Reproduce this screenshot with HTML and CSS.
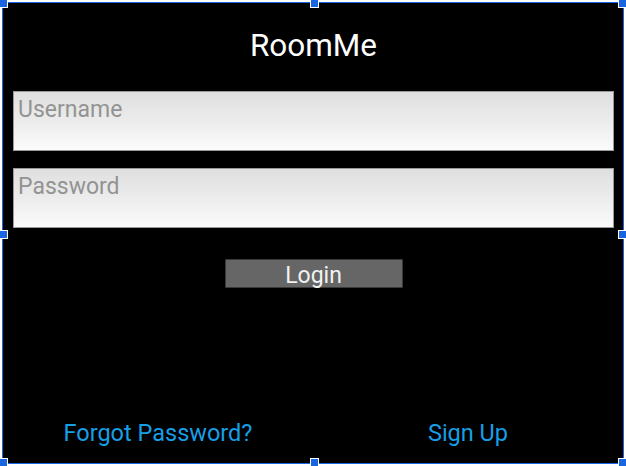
FILE: index.html
```html
<!DOCTYPE html>
<html lang="en">
<head>
<meta charset="utf-8">
<title>RoomMe</title>
<link rel="stylesheet" href="styles.css">
</head>
<body>
<div class="frame">
  <span class="handle h-tl"></span>
  <span class="handle h-tm"></span>
  <span class="handle h-tr"></span>
  <span class="handle h-ml"></span>
  <span class="handle h-mr"></span>
  <span class="handle h-bl"></span>
  <span class="handle h-bm"></span>
  <span class="handle h-br"></span>
  <div class="form">
    <h1 class="title">RoomMe</h1>
    <input class="field" type="text" placeholder="Username">
    <input class="field field-pass" type="password" placeholder="Password">
    <div class="actions">
      <button class="login" type="button">Login</button>
    </div>
  </div>
  <div class="links">
    <a class="link" href="#">Forgot Password?</a>
    <a class="link" href="#">Sign Up</a>
  </div>
</div>
</body>
</html>
```
FILE: styles.css
```css
html, body {
  margin: 0;
  padding: 0;
  background: #ffffff;
}
body {
  font-family: Roboto, "Liberation Sans", sans-serif;
}
.frame {
  position: relative;
  margin: 2px;
  width: 620px;
  height: 460px;
  border: 1px solid #1a66e0;
  background: #000000;
  display: flex;
  flex-direction: column;
}
.handle {
  position: absolute;
  width: 7px;
  height: 7px;
  background: #1a66e0;
  outline: 1px solid #ffffff;
}
.h-tl { left: -3px; top: -3px; }
.h-tm { left: calc(50% - 2px); top: -3px; }
.h-tr { right: -3px; top: -3px; }
.h-ml { left: -3px; top: calc(50% - 2px); }
.h-mr { right: -3px; top: calc(50% - 2px); }
.h-bl { left: -3px; bottom: -3px; }
.h-bm { left: calc(50% - 2px); bottom: -3px; }
.h-br { right: -3px; bottom: -3px; }
.form {
  display: flex;
  flex-direction: column;
  padding: 0 9px 0 10px;
}
.title {
  margin: 25px 0 27px;
  font-weight: 400;
  font-size: 31.5px;
  line-height: 36px;
  color: #ffffff;
  text-align: center;
}
.field {
  box-sizing: border-box;
  display: block;
  width: 601px;
  height: 60px;
  margin: 0;
  padding: 4px 4px 27px 4px;
  border: 1px solid #9a9a9a;
  border-radius: 0;
  background: linear-gradient(to bottom, #dfdfdf 0%, #ececec 50%, #fbfbfb 100%);
  font-family: Roboto, "Liberation Sans", sans-serif;
  font-size: 23px;
  line-height: 27px;
  color: #333333;
  outline: none;
}
.field::placeholder {
  color: #939393;
  opacity: 1;
}
.field-pass {
  margin-top: 17px;
}
.actions {
  display: flex;
  justify-content: center;
  margin-top: 31px;
}
.login {
  box-sizing: border-box;
  width: 178px;
  height: 29px;
  margin: 0;
  padding: 3px 0 0;
  border: 1px solid #3a3a3a;
  border-radius: 1px;
  background: #666666;
  color: #f2f2f2;
  font-family: Roboto, "Liberation Sans", sans-serif;
  font-size: 23px;
  line-height: 26px;
}
.links {
  margin-top: auto;
  padding-bottom: 17px;
  display: grid;
  grid-template-columns: 1fr 1fr;
}
.link {
  text-align: center;
  color: #179fe6;
  text-decoration: none;
  font-size: 23.5px;
  line-height: 26px;
}
```
